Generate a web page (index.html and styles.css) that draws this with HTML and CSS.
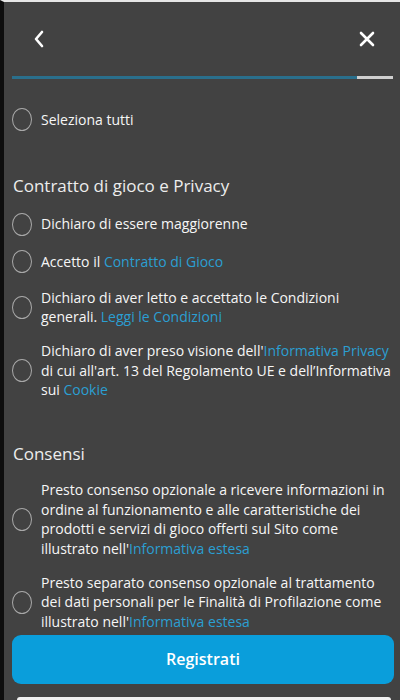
FILE: index.html
```html
<!DOCTYPE html>
<html lang="it">
<head>
<meta charset="utf-8">
<link rel="stylesheet" href="styles.css">
</head>
<body>
<div class="app">
  <header class="topbar">
    <svg class="icon back" width="14" height="20" viewBox="0 0 14 20"><path d="M10 3 L4 10 L10 17" fill="none" stroke="#fff" stroke-width="2.6" stroke-linecap="round" stroke-linejoin="round"/></svg>
    <svg class="icon close" width="18" height="18" viewBox="0 0 18 18"><path d="M3 3 L15 15 M15 3 L3 15" fill="none" stroke="#fff" stroke-width="2.6" stroke-linecap="round"/></svg>
  </header>
  <div class="progress"><div class="progress-fill"></div></div>

  <main class="content">
    <label class="row first"><span class="check"></span><span class="txt">Seleziona tutti</span></label>

    <h2 class="section">Contratto di gioco e Privacy</h2>
    <label class="row"><span class="check"></span><span class="txt">Dichiaro di essere maggiorenne</span></label>
    <label class="row"><span class="check"></span><span class="txt">Accetto il <a class="link">Contratto di Gioco</a></span></label>
    <label class="row"><span class="check"></span><span class="txt">Dichiaro di aver letto e accettato le Condizioni generali. <a class="link">Leggi le Condizioni</a></span></label>
    <label class="row"><span class="check"></span><span class="txt">Dichiaro di aver preso visione dell'<a class="link">Informativa Privacy</a> di cui all'art. 13 del Regolamento UE e dell’Informativa sui <a class="link">Cookie</a></span></label>

    <h2 class="section second">Consensi</h2>
    <label class="row"><span class="check"></span><span class="txt">Presto consenso opzionale a ricevere informazioni in ordine al funzionamento e alle caratteristiche dei prodotti e servizi di gioco offerti sul Sito come illustrato nell'<a class="link">Informativa estesa</a></span></label>
    <label class="row"><span class="check"></span><span class="txt">Presto separato consenso opzionale al trattamento dei dati personali per le Finalità di Profilazione come illustrato nell'<a class="link">Informativa estesa</a></span></label>

    <button class="primary">Registrati</button>
    <div class="secondary"></div>
  </main>
</div>
</body>
</html>
```
FILE: styles.css
```css
html, body {
  margin: 0;
  padding: 0;
  background: #424242;
}
body {
  font-family: "Open Sans", "Noto Sans", sans-serif;
  color: #f6f6f6;
  height: 700px;
  overflow: hidden;
}
.app {
  border-left: 4px solid #0d0d0d;
  border-top: 2px solid #e6e6e6;
  background: #424242;
  height: 700px;
  box-sizing: border-box;
  overflow: hidden;
}
.topbar {
  height: 74px;
  display: flex;
  align-items: center;
  justify-content: space-between;
  padding: 0 24px 0 28px;
  box-sizing: border-box;
}
.icon { display: block; }
.progress {
  margin: 0 7px 0 8px;
  height: 3px;
  background: #cfcfcf;
}
.progress-fill {
  width: 90.5%;
  height: 100%;
  background: #2a6f8c;
}
.content {
  padding: 0 6px 0 8px;
}
.row {
  display: flex;
  align-items: center;
  gap: 9px;
  margin-top: 14.5px;
  font-size: 14px;
  line-height: 19.6px;
}
.row.first { margin-top: 29px; }
.check {
  flex: 0 0 auto;
  width: 18px;
  height: 21px;
  border: 1.5px solid #a8a8a8;
  border-radius: 50%;
}
.txt { flex: 1; }
.link { color: #2b9fd2; text-decoration: none; }
.section {
  margin: 44px 0 0 1px;
  font-size: 17px;
  line-height: 22px;
  font-weight: 400;
  color: #ededed;
}
.section.second { margin-top: 43px; }
.section + .row { margin-top: 15.5px; }
.section.second + .row { margin-top: 15px; }
.primary {
  display: block;
  width: 382px;
  height: 49px;
  margin-top: 3px;
  border: none;
  border-radius: 9px;
  background: #0a9edb;
  color: #fff;
  font-family: inherit;
  font-size: 16px;
  font-weight: 600;
}
.secondary {
  margin: 13px 3px 0 5px;
  height: 3px;
  border-radius: 6px 6px 0 0;
  background: #f0f0f0;
}
```
